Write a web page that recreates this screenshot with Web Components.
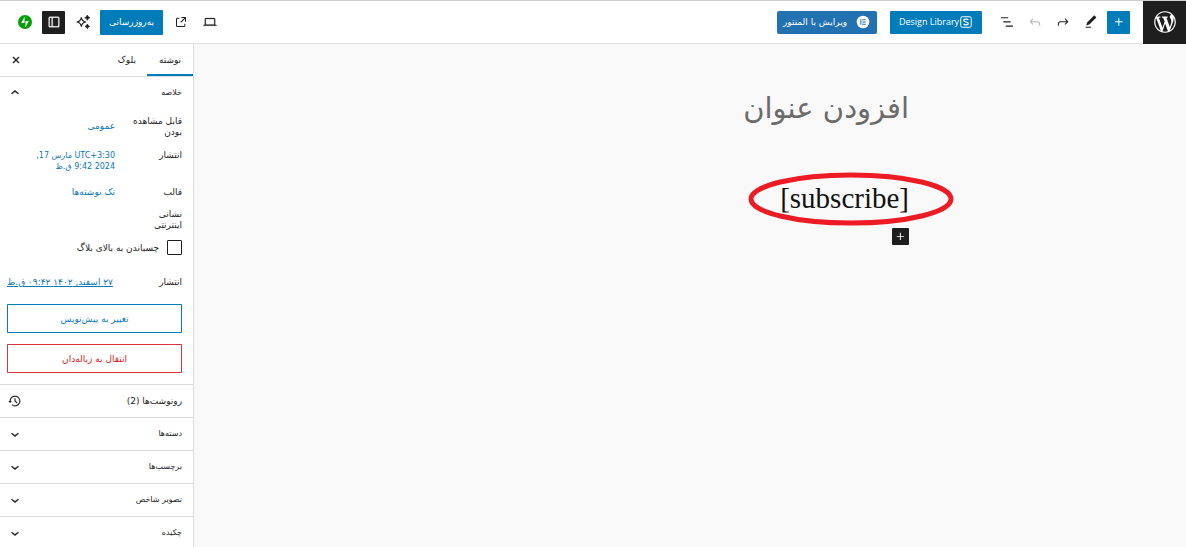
<!DOCTYPE html>
<html lang="fa" dir="rtl">
<head>
<meta charset="utf-8">
<meta name="viewport" content="width=device-width, initial-scale=1">
<title>افزودن نوشته</title>
<style>
html, body { height: 100%; }
body {
  margin: 0;
  background: #f9f9f9;
  color: #1e1e1e;
  font-family: "DejaVu Sans", sans-serif;
  font-size: 9px;
  line-height: 12px;
  --blue: #007cba;
  --link: #0a78b5;
  --line: #dddddd;
}
</style>
</head>
<body>
<post-editor></post-editor>

<script>
const icons = {
  plus: '<path d="M11 12.5V17.5H12.5V12.5H17.5V11H12.5V6H11V11H6V12.5H11Z"/>',
  undo: '<path d="M18.3 11.7c-.6-.6-1.4-.9-2.3-.9H6.7l2.9-3.3-1.1-1-4.5 5L8.5 16l1-1-2.7-2.7H16c.5 0 .9.2 1.3.5 1 1 1 3.4 1 4.5v.3h1.5v-.2c0-1.5 0-4.3-1.5-5.7z"/>',
  redo: '<path d="M15.6 6.5l-1.1 1 2.9 3.3H8c-.9 0-1.7.3-2.3.9-1.4 1.5-1.4 4.2-1.4 5.6v.2h1.5v-.3c0-1.1 0-3.5 1-4.5.3-.3.7-.5 1.3-.5h9.2L14.5 15l1.1 1.1 4.6-4.6-4.6-5z"/>',
  list: '<path d="M13.8 4.7H3v1.8h10.8V4.7zm-3.6 12.5V19H21v-1.8H10.2zm7.2-6.2H6.6v1.8h10.8V11z"/>',
  edit: '<path d="M20.1 5.1L16.9 2 6.2 12.7l-1.3 4.4 4.5-1.3L20.1 5.1zM4 20.8h8v-1.5H4v1.5z"/>',
  external: '<path d="M19.5 4.5h-7V6h4.44l-5.97 5.97 1.06 1.06L18 7.06v4.44h1.5v-7Zm-13 1a2 2 0 0 0-2 2v10a2 2 0 0 0 2 2h10a2 2 0 0 0 2-2v-3H17v3a.5.5 0 0 1-.5.5h-10a.5.5 0 0 1-.5-.5v-10a.5.5 0 0 1 .5-.5h3V5.5h-3Z"/>',
  desktop: '<path d="M20.5 16h-.7V8c0-1.100-.9-2-2-2H6.200c-1.100 0-2 .9-2 2v8h-.7c-.8 0-1.500.7-1.500 1.500h20c0-.8-.7-1.500-1.500-1.500zM5.700 8c0-.3.2-.5.5-.5h11.600c.3 0 .5.2.5.5v7.600H5.700V8z" stroke="currentColor" stroke-width=".3"/>',
  drawer: '<path d="M18 4H6c-1.1 0-2 .9-2 2v12c0 1.1.9 2 2 2h12c1.1 0 2-.9 2-2V6c0-1.1-.9-2-2-2zM8.500 18.500H6c-.3 0-.5-.2-.5-.5V6c0-.3.2-.5.5-.5h2.500v13zm10-.5c0 .3-.2.5-.5.5h-8v-13h8c.3 0 .5.2.5.5v12z" stroke="currentColor" stroke-width=".4"/>',
  sparkle: '<path fill="none" stroke="currentColor" stroke-width="1.7" stroke-linejoin="round" d="M9.500 5.500c.8 4 2.500 5.700 6.500 6.500-4 .8-5.700 2.500-6.500 6.500-.8-4-2.500-5.700-6.500-6.500 4-.8 5.700-2.500 6.500-6.500z"/><path d="M18.500 1.500l1.400 2.600 2.600 1.400-2.600 1.400-1.400 2.600-1.400-2.600-2.600-1.400 2.600-1.400zM18.500 15l1.200 2.300 2.300 1.200-2.300 1.200-1.200 2.300-1.200-2.300-2.300-1.200 2.300-1.200z" stroke="currentColor"/>',
  jetpack: '<circle cx="12" cy="12" r="10.500" fill="#069e08"/><path fill="#fff" d="M11.300 4.200v9.400H6.400zM12.700 19.800v-9.400h4.900z"/>',
  down: '<path d="M17.500 11.600L12 16l-5.500-4.400.9-1.200L12 14l4.500-3.600 1 1.200z" stroke="currentColor" stroke-width=".6"/>',
  up: '<path d="M6.500 12.400L12 8l5.500 4.400-.9 1.200L12 10l-4.500 3.600-1-1.200z" stroke="currentColor" stroke-width=".6"/>',
  close: '<path d="M12 13.060l3.712 3.713 1.061-1.060L13.061 12l3.712-3.712-1.060-1.060L12 10.938 8.288 7.227l-1.061 1.060L10.939 12l-3.712 3.712 1.060 1.061L12 13.061z" stroke="currentColor" stroke-width=".6"/>',
  history: '<path d="M5.500 12h1.750l-2.500 3-2.500-3H4a8 8 0 113.134 6.350l.907-1.194A6.500 6.500 0 105.500 12zm9.530 1.970l-2.280-2.280V8.500a.75.75 0 00-1.500 0V12a.747.747 0 00.218.529l1.282-.84-1.280.842 2.500 2.500a.75.75 0 101.060-1.061z" stroke="currentColor" stroke-width=".2"/>',
  elementor: '<circle cx="12" cy="12" r="9.500"/><path fill="#2271b1" d="M8 8h1.600v8H8zM11 8h5v1.500h-5zM11 11.250h5v1.500h-5zM11 14.500h5V16h-5z"/>',
  stackable: '<rect x="3" y="3" width="18" height="18" rx="2.500" fill="none" stroke="currentColor" stroke-width="1.700"/><path fill="none" stroke="currentColor" stroke-width="2" d="M16 8.600C15.200 7.300 13.800 7 12 7c-2.300 0-3.800.8-3.800 2.400 0 3.500 7.800 1.700 7.800 5.200 0 1.600-1.600 2.400-4 2.400-1.900 0-3.400-.4-4.200-1.800"/>',
  wordpress: '<path transform="translate(2 2)" d="M20 10c0-5.510-4.490-10-10-10C4.480 0 0 4.490 0 10c0 5.520 4.480 10 10 10 5.510 0 10-4.480 10-10zM7.780 15.370L4.370 6.220c.55-.02 1.170-.08 1.170-.08.5-.06.44-1.130-.06-1.110 0 0-1.450.11-2.370.11-.18 0-.37 0-.58-.01C4.120 2.690 6.870 1.110 10 1.110c2.330 0 4.450.87 6.050 2.340-.68-.11-1.650.39-1.650 1.580 0 .74.45 1.360.9 2.100.35.61.55 1.360.55 2.460 0 1.490-1.400 5-1.400 5l-3.030-8.370c.54-.02.82-.17.82-.17.5-.05.44-1.250-.06-1.220 0 0-1.440.12-2.380.12-.87 0-2.330-.12-2.330-.12-.5-.03-.56 1.200-.06 1.220l.92.08 1.260 3.410zM17.410 10c.24-.64.74-1.870.43-4.250.7 1.290 1.050 2.710 1.050 4.250 0 3.290-1.730 6.240-4.400 7.780.97-2.590 1.940-5.200 2.920-7.780zM6.100 18.090C3.120 16.650 1.110 13.530 1.110 10c0-1.300.23-2.480.72-3.590C3.250 10.300 4.670 14.200 6.100 18.090zm4.030-6.630l2.580 6.980c-.86.29-1.760.45-2.710.45-.79 0-1.570-.11-2.290-.33.81-2.380 1.620-4.740 2.420-7.100z"/>'
};

function define(name, render) {
  customElements.define(name, class extends HTMLElement {
    constructor() {
      super();
      this.attachShadow({ mode: 'open' });
    }
    connectedCallback() {
      this.shadowRoot.innerHTML = render(this);
    }
  });
}

define('ui-icon', el => `
<style>
:host { display: block; flex: none; width: var(--icon-size, 16px); height: var(--icon-size, 16px); }
svg { display: block; width: 100%; height: 100%; fill: currentColor; }
</style>
<svg viewBox="0 0 24 24" aria-hidden="true">${icons[el.getAttribute('name')]}</svg>`);

define('icon-button', el => `
<style>
:host { display: block; flex: none; }
button {
  display: grid; place-items: center; width: var(--button-size, 23px); height: var(--button-size, 23px);
  margin: 0; padding: 0; border: 0; border-radius: 1px; background: none; color: inherit; cursor: pointer;
}
:host([kind="primary"]) button { background: var(--blue); color: #fff; }
:host([kind="dark"]) button { background: #1e1e1e; color: #fff; }
button:disabled { color: #b5b5b5; cursor: default; }
</style>
<button type="button" aria-label="${el.getAttribute('label')}" ${el.hasAttribute('disabled') ? 'disabled' : ''}>
  <ui-icon name="${el.getAttribute('icon')}"></ui-icon>
</button>`);

define('action-button', () => `
<style>
:host { display: block; flex: none; }
button {
  display: flex; align-items: center; justify-content: center; width: 100%; height: var(--action-height, 23px);
  margin: 0; padding: 0 8px; border: 0; border-radius: 1px; background: var(--blue); color: #fff;
  font: inherit; white-space: nowrap; cursor: pointer;
}
:host([kind="elementor"]) button { background: #2271b1; gap: 8px; border-radius: 2px; }
:host([kind="outline"]) button { background: #fff; color: var(--link); box-shadow: inset 0 0 0 1px #007cba; }
:host([kind="danger"]) button { background: #fff; color: #cc1818; box-shadow: inset 0 0 0 1px #d63638; }
</style>
<button type="button"><slot></slot></button>`);

define('editor-header', () => `
<style>
:host {
  display: flex; align-items: center; justify-content: space-between; height: 42px;
  background: #fff; border-top: 1px solid #cfcfcf; border-bottom: 1px solid #e0e0e0;
}
nav, .group { display: flex; align-items: center; }
nav { gap: 13px; }
.tools { display: flex; gap: 5px; }
.group { gap: 6px; padding-left: 13px; }
.home { display: grid; place-items: center; width: 43px; height: 43px; background: #1e1e1e; color: #fff; --icon-size: 26px; }
.elementor { width: 100px; }
.library { width: 92px; font: 500 9px/12px "Open Sans", sans-serif; --icon-size: 14px; }
.update { width: 63px; --action-height: 25px; }
</style>
<nav aria-label="ابزارهای ویرایشگر">
  <a class="home" href="#" aria-label="وردپرس"><ui-icon name="wordpress"></ui-icon></a>
  <div class="tools">
    <icon-button kind="primary" icon="plus" label="افزودن بلوک"></icon-button>
    <icon-button icon="edit" label="ابزارها"></icon-button>
    <icon-button icon="redo" label="انجام دوباره"></icon-button>
    <icon-button icon="undo" label="واگرد" disabled></icon-button>
    <icon-button icon="list" label="نمای فهرست"></icon-button>
  </div>
  <action-button class="library"><ui-icon name="stackable"></ui-icon><span>Design Library</span></action-button>
  <action-button class="elementor" kind="elementor"><ui-icon name="elementor"></ui-icon><span>ویرایش با المنتور</span></action-button>
</nav>
<div class="group">
  <icon-button icon="desktop" label="پیش‌نمایش"></icon-button>
  <icon-button icon="external" label="مشاهده نوشته"></icon-button>
  <action-button class="update">به‌روزرسانی</action-button>
  <icon-button icon="sparkle" label="دستیار"></icon-button>
  <icon-button kind="dark" icon="drawer" label="تنظیمات"></icon-button>
  <icon-button icon="jetpack" label="جت‌پک"></icon-button>
</div>`);

define('editor-canvas', () => `
<style>
:host { display: block; padding: 42px 24px 0; }
article { max-width: 438px; margin: 0 auto; display: flex; flex-direction: column; align-items: flex-start; }
h1 { margin: 0; font-weight: 400; font-size: 29px; line-height: 44px; color: #6b6b6b; }
.block { position: relative; margin: 50px 0 12px; }
p { margin: 0; font: 29px/36px "Liberation Serif", serif; color: #111; }
.mark { position: absolute; top: -9px; right: -45px; width: 206px; height: 56px; overflow: visible; pointer-events: none; }
.add { --button-size: 17px; --icon-size: 15px; }
</style>
<article>
  <h1>افزودن عنوان</h1>
  <div class="block">
    <p dir="ltr">[subscribe]</p>
    <svg class="mark" viewBox="0 0 206 56" aria-hidden="true"><ellipse cx="103" cy="28" rx="100" ry="24" fill="none" stroke="#ed1c24" stroke-width="5"/></svg>
  </div>
  <icon-button class="add" kind="dark" icon="plus" label="افزودن بلوک"></icon-button>
</article>`);

define('setting-row', () => `
<style>
:host { display: grid; grid-template-columns: 56px 1fr; column-gap: 11px; align-items: start; line-height: 11px; }
.value { color: var(--link); }
</style>
<div><slot name="label"></slot></div>
<div class="value"><slot></slot></div>`);

define('panel-section', el => `
<style>
:host { display: block; border-top: 1px solid var(--line); }
:host([first]) { border-top: 0; }
h2 { margin: 0; font: inherit; font-size: 8px; }
:host([icon="history"]) h2 { font-size: 9px; }
button {
  display: flex; align-items: center; justify-content: space-between; width: 100%; height: 32px;
  margin: 0; padding: 0 11px 0 7px; border: 0; background: none; color: inherit; font: inherit; cursor: pointer;
}
</style>
<h2><button type="button" ${el.hasAttribute('first') ? 'aria-expanded="true"' : ''}><span>${el.getAttribute('heading')}</span><ui-icon name="${el.getAttribute('icon') || 'down'}"></ui-icon></button></h2>
<slot></slot>`);

define('editor-sidebar', () => `
<style>
:host { display: block; background: #fff; border-right: 1px solid var(--line); }
.tabs { display: flex; align-items: stretch; height: 32px; border-bottom: 1px solid var(--line); }
.tabs button { margin: 0; padding: 0 11px; border: 0; background: none; color: inherit; font: inherit; cursor: pointer; }
.tabs button[aria-selected="true"] { width: 46px; box-shadow: inset 0 -2px var(--blue); }
.tabs icon-button { margin: auto auto auto 4px; }
.summary { display: flex; flex-direction: column; padding: 7px 11px 11px 7px; }
.rows { display: grid; grid-template-rows: 34px 37px 22px auto; }
.mid { padding-top: 5px; }
.link { margin: 0; padding: 0; border: 0; background: none; color: inherit; font: inherit; line-height: inherit; text-align: right; cursor: pointer; }
.stamp { font-size: 8px; }
.check { display: flex; align-items: center; gap: 8px; margin-top: 9px; }
.check input { appearance: none; width: 15px; height: 15px; margin: 0; border: 1px solid #1e1e1e; border-radius: 1px; background: #fff; }
.date { display: flex; justify-content: space-between; margin: 21px 0 16px; }
.date a { color: var(--link); white-space: nowrap; }
.actions { display: grid; gap: 11px; --action-height: 29px; }
</style>
<div class="tabs" role="tablist">
  <button type="button" role="tab" aria-selected="true">نوشته</button>
  <button type="button" role="tab" aria-selected="false">بلوک</button>
  <icon-button icon="close" label="بستن تنظیمات"></icon-button>
</div>
<panel-section first heading="خلاصه" icon="up">
  <div class="summary">
    <div class="rows">
      <setting-row><span slot="label">قابل مشاهده بودن</span><div class="mid"><button class="link" type="button">عمومی</button></div></setting-row>
      <setting-row><span slot="label">انتشار</span><button class="link stamp" type="button">UTC+3:30 مارس 17,<br>2024 9:42 ق.ظ</button></setting-row>
      <setting-row><span slot="label">قالب</span><button class="link" type="button">تک نوشته‌ها</button></setting-row>
      <setting-row><span slot="label">نشانی<br>اینترنتی</span></setting-row>
    </div>
    <label class="check"><input type="checkbox"><span>چسباندن به بالای بلاگ</span></label>
    <div class="date"><span>انتشار</span><a href="#">۲۷ اسفند, ۱۴۰۲ ۰۹:۴۲ ق.ظ</a></div>
    <div class="actions">
      <action-button kind="outline">تغییر به پیش‌نویس</action-button>
      <action-button kind="danger">انتقال به زباله‌دان</action-button>
    </div>
  </div>
</panel-section>
<panel-section heading="رونوشت‌ها (2)" icon="history"></panel-section>
<panel-section heading="دسته‌ها"></panel-section>
<panel-section heading="برچسب‌ها"></panel-section>
<panel-section heading="تصویر شاخص"></panel-section>
<panel-section heading="چکیده"></panel-section>`);

define('post-editor', () => `
<style>
:host { display: flex; flex-direction: column; height: 100vh; overflow: hidden; }
main { flex: 1; min-height: 0; display: grid; grid-template-columns: minmax(0, 1fr) 194px; }
editor-sidebar { box-sizing: border-box; overflow: hidden; }
</style>
<editor-header></editor-header>
<main>
  <editor-canvas></editor-canvas>
  <editor-sidebar></editor-sidebar>
</main>`);
</script>
</body>
</html>
